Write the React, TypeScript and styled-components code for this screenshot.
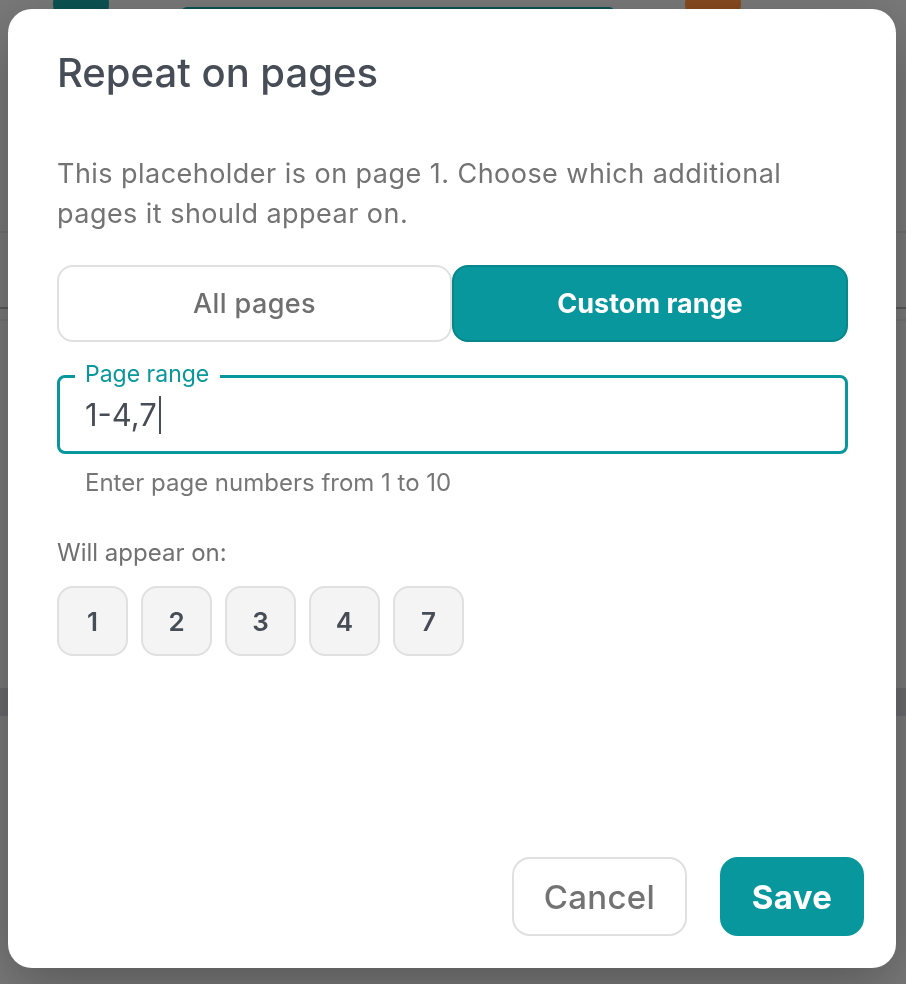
import React from "react";
import styled, { createGlobalStyle } from "styled-components";

const TEAL = "#08979c";

const GlobalStyle = createGlobalStyle`
  html, body { margin: 0; padding: 0; }
  body {
    font-family: Inter, "Noto Sans", Arial, sans-serif;
    background: #e4e4e4;
    overflow: hidden;
  }
  * { box-sizing: border-box; }
`;

/* ---------- page behind the dialog ---------- */
const Page = styled.div`
  height: 984px;
  display: flex;
  flex-direction: column;
  background: #e4e4e4;
  overflow: hidden;
`;

const TopBar = styled.header`
  display: flex;
  align-items: flex-start;
  margin-top: -24px;
  padding-left: 53px;
  height: 120px;
  flex: none;
`;

const Avatar = styled.div<{ $color: string }>`
  width: 56px;
  height: 56px;
  border-radius: 50%;
  background: ${(p) => p.$color};
  flex: none;
`;

const SearchBox = styled.div`
  margin: 31px 70px 0 72px;
  width: 434px;
  height: 44px;
  border: 3px solid #169c9c;
  border-radius: 6px;
  background: #fff;
`;

const PageRow = styled.div<{ $h: number; $line: string; $bg?: string }>`
  height: ${(p) => p.$h}px;
  border-bottom: 2px solid ${(p) => p.$line};
  background: ${(p) => p.$bg ?? "transparent"};
  flex: none;
`;

/* ---------- overlay + dialog ---------- */
const Overlay = styled.div`
  position: fixed;
  inset: 0;
  background: rgba(0, 0, 0, 0.47);
  display: flex;
  justify-content: flex-start;
  align-items: flex-start;
  padding: 9px 0 0 8px;
`;

const Dialog = styled.div`
  width: 888px;
  height: 959px;
  background: #fff;
  border-radius: 24px;
  display: flex;
  flex-direction: column;
  box-shadow: 0 18px 60px rgba(0, 0, 0, 0.28);
`;

const Body = styled.div`
  flex: 1;
  display: flex;
  flex-direction: column;
  padding: 40px 48px 0 49px;
`;

const Title = styled.h2`
  margin: 0;
  font-size: 40px;
  line-height: 48px;
  font-weight: 500;
  color: #474d56;
`;

const Description = styled.p`
  margin: 57px 0 0;
  font-size: 27px;
  line-height: 40px;
  letter-spacing: 0.46px;
  font-weight: 400;
  color: #737373;
`;

const ToggleGroup = styled.div`
  margin-top: 31px;
  display: grid;
  grid-template-columns: 395px 396px;
`;

const ToggleButton = styled.button<{ $active?: boolean }>`
  height: 77px;
  border-radius: 16px;
  font-family: inherit;
  font-size: 27px;
  font-weight: ${(p) => (p.$active ? 700 : 500)};
  letter-spacing: ${(p) => (p.$active ? 0 : 0.4)}px;
  color: ${(p) => (p.$active ? "#fff" : "#6f6f6f")};
  background: ${(p) => (p.$active ? TEAL : "#fff")};
  border: 2px solid ${(p) => (p.$active ? "#07878c" : "#e0e0e0")};
  cursor: pointer;
`;

const Field = styled.div`
  position: relative;
  margin-top: 33px;
  height: 79px;
  border: 3px solid ${TEAL};
  border-radius: 8px;
  padding: 0 25px;
  display: flex;
  align-items: center;
`;

const FloatLabel = styled.span`
  position: absolute;
  top: -16px;
  left: 15px;
  padding: 0 11px 0 10px;
  background: #fff;
  font-size: 23px;
  line-height: 24px;
  color: ${TEAL};
`;

const FieldValue = styled.div`
  display: flex;
  align-items: center;
  font-size: 31px;
  line-height: 38px;
  color: #474d56;
`;

const Caret = styled.span`
  display: inline-block;
  width: 2px;
  height: 38px;
  margin-left: 2px;
  background: #474d56;
`;

const Helper = styled.div`
  margin-top: 13px;
  padding-left: 28px;
  font-size: 24px;
  line-height: 32px;
  color: #767676;
`;

const SubLabel = styled.div`
  margin-top: 38px;
  font-size: 24px;
  line-height: 32px;
  color: #707070;
`;

const Chips = styled.div`
  margin-top: 17px;
  display: flex;
  gap: 13px;
`;

const Chip = styled.div`
  width: 71px;
  height: 70px;
  border-radius: 16px;
  border: 2px solid #e0e0e0;
  background: #f4f4f4;
  display: flex;
  align-items: center;
  justify-content: center;
  font-size: 26px;
  font-weight: 600;
  color: #474d56;
`;

const Footer = styled.div`
  display: flex;
  justify-content: flex-end;
  gap: 33px;
  padding: 0 32px 32px 0;
`;

const ActionButton = styled.button<{ $primary?: boolean }>`
  height: 79px;
  width: ${(p) => (p.$primary ? 144 : 175)}px;
  border-radius: 18px;
  font-family: inherit;
  font-size: 33px;
  font-weight: ${(p) => (p.$primary ? 700 : 500)};
  letter-spacing: 0.3px;
  color: ${(p) => (p.$primary ? "#fff" : "#737373")};
  background: ${(p) => (p.$primary ? TEAL : "#fff")};
  border: 2px solid ${(p) => (p.$primary ? TEAL : "#e0e0e0")};
  cursor: pointer;
`;

const pages = [1, 2, 3, 4, 7];

export default function App() {
  return (
    <>
      <GlobalStyle />
      <Page>
        <TopBar>
          <Avatar $color="#179c9d" />
          <SearchBox />
          <Avatar $color="#ff8c3a" />
        </TopBar>
        <PageRow $h={137} $line="#d4d4d4" />
        <PageRow $h={76} $line="#a8a8a8" />
        <PageRow $h={12} $line="#d8d8d8" />
        <PageRow $h={367} $line="#e4e4e4" />
        <PageRow $h={30} $line="#e4e4e4" $bg="#c7c8cc" />
      </Page>
      <Overlay>
        <Dialog role="dialog" aria-labelledby="dlg-title">
          <Body>
            <Title id="dlg-title">Repeat on pages</Title>
            <Description>
              This placeholder is on page 1. Choose which additional pages it
              should appear on.
            </Description>
            <ToggleGroup>
              <ToggleButton>All pages</ToggleButton>
              <ToggleButton $active>Custom range</ToggleButton>
            </ToggleGroup>
            <Field>
              <FloatLabel>Page range</FloatLabel>
              <FieldValue>
                1-4,7
                <Caret />
              </FieldValue>
            </Field>
            <Helper>Enter page numbers from 1 to 10</Helper>
            <SubLabel>Will appear on:</SubLabel>
            <Chips>
              {pages.map((n) => (
                <Chip key={n}>{n}</Chip>
              ))}
            </Chips>
          </Body>
          <Footer>
            <ActionButton>Cancel</ActionButton>
            <ActionButton $primary>Save</ActionButton>
          </Footer>
        </Dialog>
      </Overlay>
    </>
  );
}
